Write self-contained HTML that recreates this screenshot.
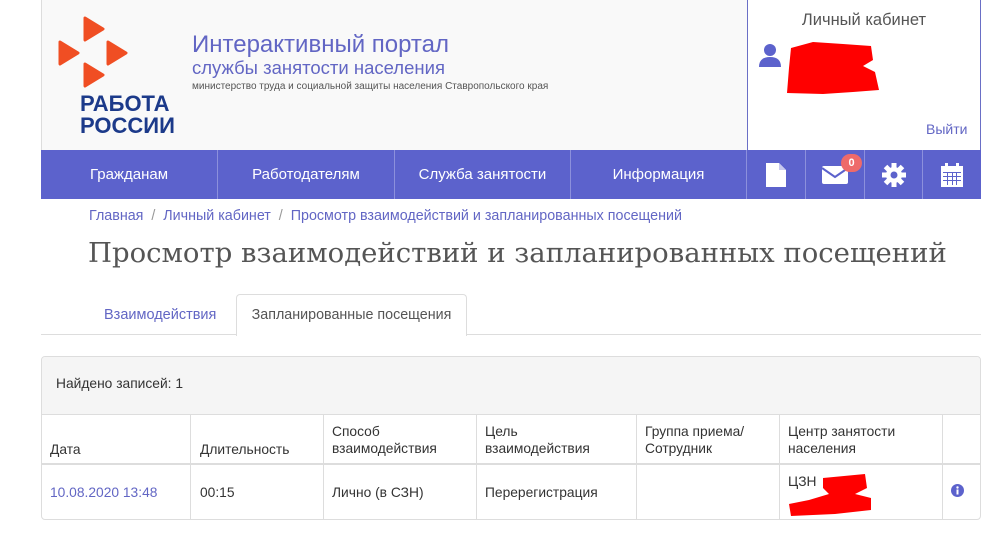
<!DOCTYPE html>
<html><head><meta charset="utf-8"><style>
*{box-sizing:border-box;margin:0;padding:0}
body{width:995px;height:533px;background:#fff;font-family:"Liberation Sans",sans-serif;position:relative;overflow:hidden;color:#333}
.abs{position:absolute}
.hdr{left:41px;top:0;width:706px;height:150px;background:#f9f9f9;border-left:1px solid #ddd}
.rbox{left:747px;top:0;width:234px;height:150px;background:#fff;border-left:1px solid #6a6fc6;border-right:1px solid #6a6fc6}
.nav{left:41px;top:150px;width:940px;height:49px;background:#5c62cc}
.nav div{position:absolute;top:0;height:49px;color:#fff;font-size:15px;display:flex;align-items:center;justify-content:center;border-right:1px solid #8c90dc}
.tbl{left:41px;top:356px;width:940px;height:164px;border:1px solid #ddd;border-radius:4px;overflow:hidden}
.cell{position:absolute;font-size:13.8px;color:#333;line-height:17px}
.vl{position:absolute;width:1px;background:#ddd}
</style></head><body>
<div class="abs hdr"></div>
<svg class="abs" style="left:55px;top:14px" width="80" height="80" viewBox="0 0 80 80">
<g fill="#f04e23" stroke="#f04e23" stroke-width="3" stroke-linejoin="round">
<polygon points="30,4 48,15 30,26"/>
<polygon points="5,28 23,39 5,50"/>
<polygon points="53,28 71,39 53,50"/>
<polygon points="30,50 48,61 30,72"/></g>
</svg>
<div class="abs" style="left:80px;top:93px;font-size:22px;font-weight:bold;color:#1c3a8a;line-height:22px">РАБОТА<br>РОССИИ</div>
<div class="abs" style="left:192px;top:31px;font-size:24px;color:#6266c4">Интерактивный портал</div>
<div class="abs" style="left:192px;top:57px;font-size:18.5px;color:#6266c4">службы занятости населения</div>
<div class="abs" style="left:192px;top:81px;font-size:10px;color:#555">министерство труда и социальной защиты населения Ставропольского края</div>
<div class="abs rbox"></div>
<div class="abs" style="left:747px;top:11px;width:234px;text-align:center;font-size:16.5px;color:#555">Личный кабинет</div>
<svg class="abs" style="left:757px;top:42px" width="26" height="26" viewBox="0 0 26 26"><circle cx="13" cy="8" r="6" fill="#5c62cc"/><path d="M2 25 Q2 15 13 15 Q24 15 24 25Z" fill="#5c62cc"/></svg>
<svg class="abs" style="left:783px;top:38px" width="108" height="60" viewBox="0 0 108 60"><path d="M8 10 L30 4 L60 6 L88 8 L90 22 L80 28 L92 34 L96 52 L70 54 L40 56 L4 55 L6 30Z" fill="#f00"/></svg>
<div class="abs" style="left:926px;top:121px;font-size:14px;color:#6266c4">Выйти</div>
<div class="abs nav">
<div style="left:0;width:177px">Гражданам</div>
<div style="left:177px;width:177px">Работодателям</div>
<div style="left:354px;width:176px">Служба занятости</div>
<div style="left:530px;width:176px">Информация</div>
<div style="left:706px;width:59px"><svg width="22" height="26" viewBox="0 0 22 26"><path d="M1 1H14L21 8V25H1Z" fill="#fff"/><path d="M14 1V8H21" fill="#c8c9ee"/></svg></div>
<div style="left:765px;width:59px"><svg width="28" height="20" viewBox="0 0 28 20"><rect x="1" y="1" width="26" height="18" rx="2" fill="#fff"/><path d="M1 3 L14 12 L27 3" stroke="#5c62cc" stroke-width="2" fill="none"/></svg></div>
<div style="left:824px;width:58px"><svg width="26" height="26" viewBox="0 0 26 26"><g fill="#fff"><circle cx="13" cy="13" r="8"/><rect x="10.5" y="1" width="5" height="24"/><rect x="1" y="10.5" width="24" height="5"/><rect x="10.5" y="1" width="5" height="24" transform="rotate(45 13 13)"/><rect x="10.5" y="1" width="5" height="24" transform="rotate(-45 13 13)"/></g><circle cx="13" cy="13" r="3.5" fill="#5c62cc"/></svg></div>
<div style="left:882px;width:58px;border-right:none"><svg width="24" height="26" viewBox="0 0 24 26"><rect x="1" y="4" width="22" height="21" fill="#fff"/><rect x="5" y="1" width="3" height="6" fill="#fff"/><rect x="16" y="1" width="3" height="6" fill="#fff"/><g fill="#5c62cc"><rect x="3" y="10" width="18" height="1"/><rect x="3" y="14" width="18" height="1"/><rect x="3" y="18" width="18" height="1"/><rect x="7" y="10" width="1" height="13"/><rect x="12" y="10" width="1" height="13"/><rect x="16" y="10" width="1" height="13"/></g></svg></div>
</div>
<div class="abs" style="left:841px;top:154px;width:21px;height:18px;border-radius:9px;background:#ee6a6a;color:#fff;font-size:11px;font-weight:bold;text-align:center;line-height:18px">0</div>
<div class="abs" style="left:89px;top:208px;font-size:14.3px;color:#6266c4">Главная <span style="color:#999">&nbsp;/&nbsp;</span> Личный кабинет <span style="color:#999">&nbsp;/&nbsp;</span> Просмотр взаимодействий и запланированных посещений</div>
<div class="abs" style="left:88px;top:237px;font-family:'DejaVu Serif',serif;font-size:27.5px;color:#555;white-space:nowrap">Просмотр взаимодействий и запланированных посещений</div>
<div class="abs" style="left:41px;top:334px;width:940px;height:1px;background:#ddd"></div>
<div class="abs" style="left:104px;top:307px;font-size:14.5px;color:#6266c4">Взаимодействия</div>
<div class="abs" style="left:236px;top:294px;width:231px;height:42px;background:#fff;border:1px solid #ddd;border-bottom:none;border-radius:4px 4px 0 0;font-size:14.3px;color:#555;text-align:center;line-height:41px">Запланированные посещения</div>
<div class="abs tbl">
<div style="position:absolute;left:0;top:0;width:940px;height:58px;background:#f5f5f5;border-bottom:1px solid #ddd"></div>
<div style="position:absolute;left:0;top:106px;width:940px;height:2px;background:#ddd"></div>
</div>
<div class="cell" style="left:56px;top:375px">Найдено записей: 1</div>
<div class="vl" style="left:190px;top:414px;height:105px"></div>
<div class="vl" style="left:323px;top:414px;height:105px"></div>
<div class="vl" style="left:476px;top:414px;height:105px"></div>
<div class="vl" style="left:636px;top:414px;height:105px"></div>
<div class="vl" style="left:779px;top:414px;height:105px"></div>
<div class="vl" style="left:942px;top:414px;height:105px"></div>
<div class="cell" style="left:50px;top:441px">Дата</div>
<div class="cell" style="left:200px;top:441px">Длительность</div>
<div class="cell" style="left:332px;top:423px">Способ<br>взаимодействия</div>
<div class="cell" style="left:485px;top:423px">Цель<br>взаимодействия</div>
<div class="cell" style="left:645px;top:423px">Группа приема/<br>Сотрудник</div>
<div class="cell" style="left:788px;top:423px">Центр занятости<br>населения</div>
<div class="cell" style="left:50px;top:484px;color:#6266c4">10.08.2020 13:48</div>
<div class="cell" style="left:200px;top:484px">00:15</div>
<div class="cell" style="left:332px;top:484px">Лично (в СЗН)</div>
<div class="cell" style="left:485px;top:484px">Перерегистрация</div>
<div class="cell" style="left:788px;top:473px">ЦЗН</div>
<svg class="abs" style="left:785px;top:470px" width="90" height="46" viewBox="0 0 90 46"><path d="M38 8 L80 4 L82 18 L70 24 L86 28 L86 40 L50 44 L6 46 L4 34 L24 30 L44 24 L38 18Z" fill="#f00"/></svg>
<svg class="abs" style="left:951px;top:484px" width="13" height="13" viewBox="0 0 13 13"><circle cx="6.5" cy="6.5" r="6.5" fill="#5c62cc"/><rect x="5.5" y="5.5" width="2" height="5" fill="#fff"/><circle cx="6.5" cy="3.5" r="1.2" fill="#fff"/></svg>
</body></html>
